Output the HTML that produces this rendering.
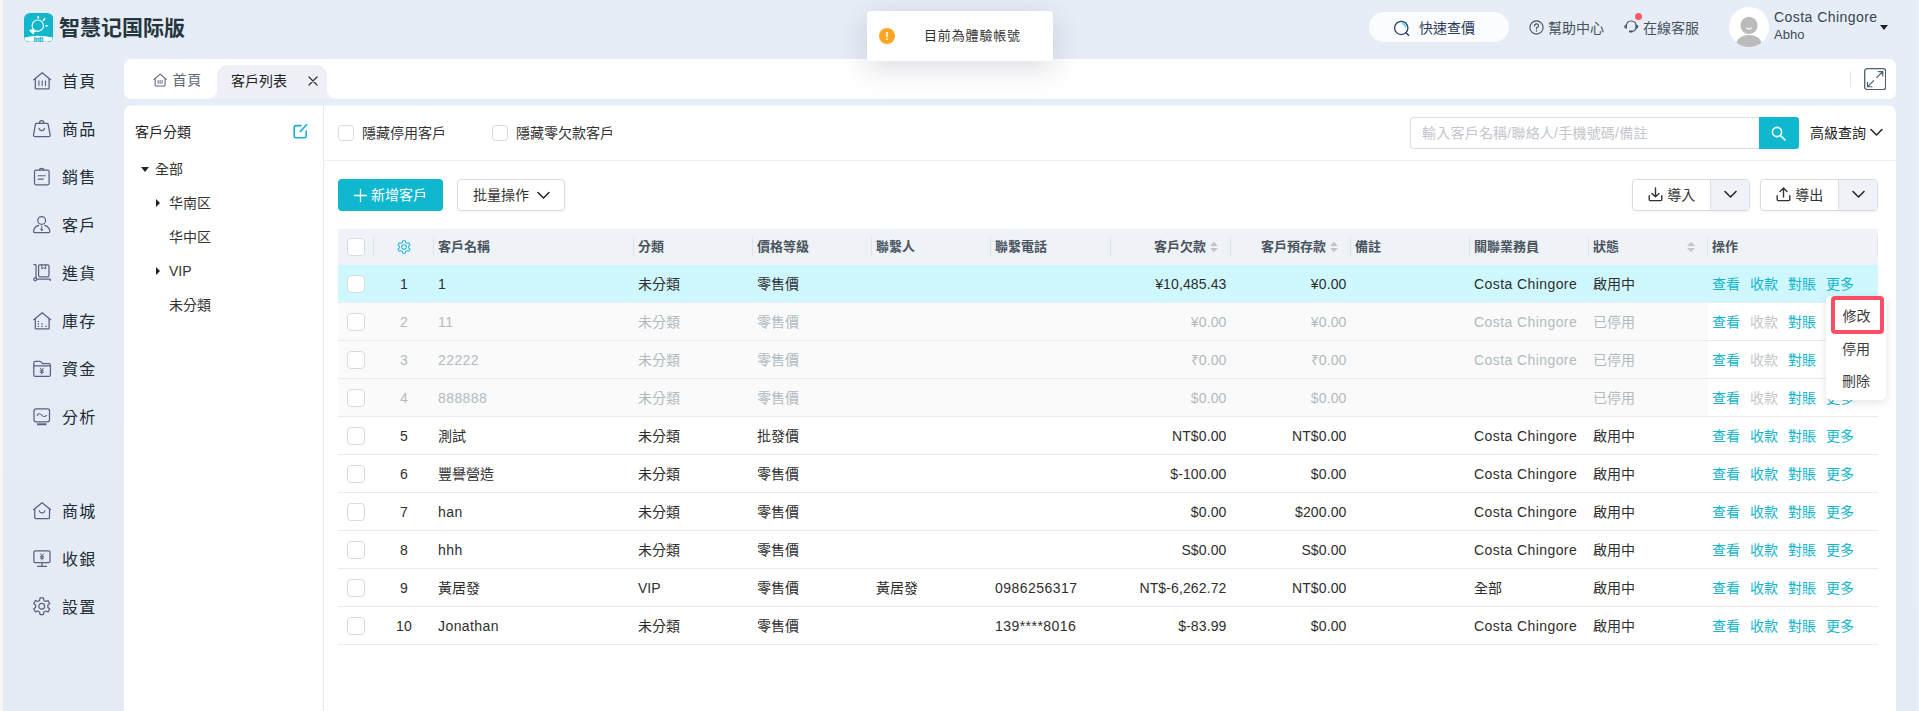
<!DOCTYPE html>
<html lang="zh-Hant">
<head>
<meta charset="utf-8">
<title>客戶列表</title>
<style>
*{box-sizing:border-box;margin:0;padding:0}
html,body{width:1919px;height:711px;overflow:hidden}
body{position:relative;font-family:"Liberation Sans","Noto Sans CJK TC","Noto Sans CJK SC",sans-serif;font-size:14px;color:#222;
 background:linear-gradient(180deg,#e6edf6 0%,#e4ebf4 100%)}
i{font-style:normal;display:inline-block}
svg{display:block}
.edge{position:absolute;left:0;top:0;width:4px;height:711px;background:linear-gradient(90deg,#f7f7f7 0,#f5f5f6 70%,#dde2ea 100%)}
.edge2{position:absolute;left:1915.5px;top:0;width:3.5px;height:711px;background:linear-gradient(90deg,#dde3ed 0,#ebf0f7 35%,#ecf1f8 100%)}
.logo{position:absolute;left:23.9px;top:12.8px;width:29.3px;height:29.3px}
.logo svg{width:29.3px;height:29.3px}
.brand{position:absolute;left:59px;top:12.6px;font-size:21px;line-height:30px;font-weight:700;color:#26363e;font-family:"Liberation Sans","Noto Sans CJK SC",sans-serif;letter-spacing:0}

.quick{position:absolute;left:1369px;top:12px;width:140px;height:30px;border-radius:15px;background:#fbfcfe;color:#2b3a5c}
.quick svg{position:absolute;left:25px;top:8px}
.quick span{position:absolute;left:50px;top:1px;line-height:30px;font-size:14px}
.help{position:absolute;left:1529px;top:12px;height:30px;color:#45535c}
.help svg{position:absolute;left:0;top:8px}
.help span{position:absolute;left:19px;top:.7px;line-height:30px;white-space:nowrap}
.svc{position:absolute;left:1623px;top:12px;height:30px;color:#45535c}
.svc svg{position:absolute;left:1px;top:7.3px;width:14.5px;height:14.5px}
.svc span{position:absolute;left:20px;top:.7px;line-height:30px;white-space:nowrap}
.svc .dot{position:absolute;left:12.4px;top:1.4px;width:7px;height:7px;border-radius:50%;background:#ff5a64}
.avatar{position:absolute;left:1729px;top:7px;width:40px;height:40px}
.uname{position:absolute;left:1774px;top:7px;line-height:20px;font-size:14px;color:#35454e;white-space:nowrap;letter-spacing:.45px}
.ucomp{position:absolute;left:1774px;top:25.5px;line-height:18px;font-size:13px;color:#3f4d56;white-space:nowrap}
.ucaret{position:absolute;left:1880px;top:25px;width:0;height:0;border:4.5px solid transparent;border-top:5px solid #222;border-bottom:0}

.side{position:absolute;left:0;top:0;width:124px;height:711px}
.sitem{position:absolute;left:33px;height:24px;width:90px}
.sic{position:absolute;left:0.3px;top:2.7px;width:18px;height:18px}
.sic svg{width:18px;height:18px;overflow:visible}
.stx{position:absolute;left:29px;top:1.4px;line-height:24px;font-size:16px;color:#212b36;white-space:nowrap;letter-spacing:1.3px}

.tabbar{position:absolute;left:124px;top:59px;width:1772px;height:40px;background:#fff;border-radius:7px}
.tab1{position:absolute;left:0;top:0;width:93px;height:40px;color:#5f6577}
.tab1 svg{position:absolute;left:29.3px;top:13.6px;width:14.2px;height:14.2px}
.tab1 span{position:absolute;left:48.6px;top:1px;line-height:41px;font-size:14px;white-space:nowrap;letter-spacing:.6px}
.tab2{position:absolute;left:93px;top:6px;width:110px;height:34px;background:#edf0f6;border-radius:10px 10px 0 0;color:#222}
.tab2 .t2t{position:absolute;left:14px;top:1.5px;line-height:29px;font-size:14px;white-space:nowrap}
.tab2 .tclose{position:absolute;left:91px;top:11px}
.tab2 .tl,.tab2 .trr{position:absolute;bottom:0;width:9px;height:9px;background:#edf0f6}
.tab2 .tl{left:-9px}
.tab2 .trr{right:-9px}
.tab2 .tl:after,.tab2 .trr:after{content:"";position:absolute;top:-9px;width:18px;height:18px;border-radius:50%;background:#fff}
.tab2 .tl:after{left:-9px}
.tab2 .trr:after{left:0}
.tabsep{position:absolute;left:1726px;top:12px;width:1px;height:16px;background:#e3e6ec}
.full{position:absolute;left:1740px;top:9px;width:22.3px;height:22.3px}
.full svg{width:22.3px;height:22.3px}

.main{position:absolute;left:124px;top:105px;width:1772px;height:620px;clip-path:inset(0.6px 0 0 0 round 7px 7px 0 0);background:#fff;border-radius:7px 7px 0 0;overflow:hidden}
.cat{position:absolute;left:0;top:0;width:199px;height:620px}
.cat-t{position:absolute;left:11px;top:16px;line-height:22px;font-size:14px;color:#222}
.cat-e{position:absolute;left:169px;top:19px}
.tn{position:absolute;height:22px;line-height:22px;white-space:nowrap;color:#333}
.tn i{position:absolute;left:0;top:8px;width:0;height:0}
.tn i.ad{border:4.2px solid transparent;border-top:5px solid #222;border-bottom:0;top:9.5px;left:-1.5px}
.tn i.ar{border:4px solid transparent;border-left:4.6px solid #222;border-right:0;left:0;top:7.5px}
.tn span{position:absolute;left:13px;top:1px}
.vline{position:absolute;left:199px;top:0;width:1px;height:620px;background:#e4e7ed}
.filter{position:absolute;left:200px;top:0;width:1572px;height:54px}
.cb{width:16px;height:16px;border:1px solid #d9dadf;border-radius:3.5px;background:#fff}
.filter .cb{position:absolute}
.ftx{position:absolute;top:0;line-height:56px;font-size:14px;color:#333;white-space:nowrap}
.sinput{position:absolute;left:1086px;top:12px;width:350px;height:32px;border:1px solid #dcdfe6;border-right:0;border-radius:4px 0 0 4px;background:#fff}
.sinput span{position:absolute;left:11px;top:0;line-height:31px;font-size:14px;color:#c3c6cc;white-space:nowrap;letter-spacing:0.22px}
.sbtn{position:absolute;left:1435px;top:12px;width:40px;height:32px;background:#0fb8ce;border-radius:0 3px 3px 0}
.sbtn svg{position:absolute;left:11px;top:8px}
.adv{position:absolute;left:1486px;top:0;height:56px}
.adv span{position:absolute;left:0;top:0;line-height:56px;font-size:14px;color:#222;white-space:nowrap}
.adv .chev{position:absolute;left:60px;top:23px}
.hline{position:absolute;left:200px;top:55px;width:1572px;height:1px;background:#ebeef3}

.btn-add{position:absolute;left:214px;top:74px;width:105px;height:32px;border-radius:4px;background:#0fb8ce;color:#fff;font-size:14px}
.btn-add .plus{position:absolute;left:16px;top:10px}
.btn-add span+span{position:absolute;left:33px;top:0;line-height:32px;white-space:nowrap}
.btn-batch{position:absolute;left:333px;top:74px;width:108px;height:32px;box-shadow:0 1px 2px rgba(0,0,0,.06);border:1px solid #d9dbe0;border-radius:4px;background:#fff;color:#333}
.btn-batch span{position:absolute;left:15px;top:0;line-height:30px;white-space:nowrap}
.btn-batch .chev{position:absolute;left:79px;top:11px}
.btn-imp,.btn-exp{position:absolute;top:74px;height:32px;box-shadow:0 1px 2px rgba(0,0,0,.06);border:1px solid #d9dbe0;border-radius:4px;background:#fff;color:#333;overflow:hidden}
.btn-imp{left:1508px;width:118px}
.btn-exp{left:1636px;width:118px}
.bl{position:absolute;left:0;top:0;width:78px;height:30px;border-right:1px solid #dcdfe6}
.bl svg{position:absolute;left:15px;top:7px}
.bl span{position:absolute;left:34.2px;top:0;line-height:30px;white-space:nowrap}
.br{position:absolute;left:78px;top:0;width:38px;height:30px;background:#eff2f7}
.br .chev{position:absolute;left:12.5px;top:10.4px}

.table{position:absolute;left:214px;top:124px;width:1540px}
.th-row{display:flex;height:36px;background:#eff2f7}
.th{position:relative;height:36px;line-height:36px;font-weight:700;color:#49545e;padding:0 5px;white-space:nowrap;font-size:13px}
.th:not(.c0):before{content:"";position:absolute;left:0;top:8px;width:1px;height:20px;background:#dfe3ea}
.th.c12:after{content:"";position:absolute;right:0;top:8px;width:1px;height:20px;background:#dfe3ea}
.tr{display:flex;height:38px;border-bottom:1px solid #ebebed;background:#fff}
.td{height:37px;line-height:38.6px;padding:0 5px;white-space:nowrap;color:#2e2e2e;overflow:hidden}
.c0{width:35px}.c1{width:60px;text-align:center}.c2{width:200px}
.c3,.c4,.c5,.c9,.c10,.c11{width:119px}
.c6,.c7,.c8{width:120px}
.td.c6{letter-spacing:.45px}
.c12{width:171px}
.r{text-align:right;padding-right:4px}
.td.c7,.td.c8{padding-right:3.5px}
.th.r{padding-right:12px}
.c1.td{padding-left:7px}
.la{letter-spacing:.42px}
.nu{letter-spacing:.12px}
.c0 .cb{position:relative;top:10px;left:4px;display:block;width:17.7px;height:18px;border-radius:4px}
.th.c0 .cb{top:9px}
.th.c1 svg{position:absolute;left:22.6px;top:9.6px}
.tr.sel{background:#cff8fe}
.tr.dis{background:#fafafa}
.tr.dis .td{color:#b1bac0}
.tr.dis .td.c12{background:#fff;box-shadow:inset 1px 0 0 #fafafa}
.lk{color:#13b5cb;margin-right:10px}
.lk.off{color:#c5c6c9}
.sort{position:relative;display:inline-block;width:8px;height:10px;margin-left:4px;vertical-align:-1px}
.sort:before,.sort:after{content:"";position:absolute;left:0;width:0;height:0;border:4px solid transparent}
.sort:before{top:-4px;border-bottom:4px solid #c2c3c6}
.sort:after{top:6px;border-top:4px solid #c2c3c6}

.menu{position:absolute;left:1826px;top:296px;width:60px;height:104px;background:#fff;border-radius:5px;box-shadow:0 2px 10px rgba(0,0,0,.12)}
.mi{position:absolute;left:0;width:60px;height:32px;line-height:32px;text-align:center;font-size:14px;color:#3c3c3c}
.mi:nth-child(1){top:4px}.mi:nth-child(2){top:36.7px}.mi:nth-child(3){top:68.7px}
.mi.hl{left:5.2px;top:-0.3px;width:52.8px;height:38px;line-height:31.4px;border:4px solid #fa4e66;border-radius:4px;text-indent:-2px;padding-top:1px}

.toast{position:absolute;left:867px;top:11px;width:186px;height:50px;background:#fff;border-radius:4px;box-shadow:0 7px 30px rgba(40,50,75,.17)}
.warn{position:absolute;left:12px;top:17px;width:16px;height:16px;border-radius:50%;background:#fba622;color:#fff;font-size:11px;font-weight:700;line-height:16px;text-align:center}
.ttx{position:absolute;left:57px;top:0;line-height:50px;font-size:13px;color:#333;white-space:nowrap;letter-spacing:0.85px}

</style>
</head>
<body>

<div class="edge"></div>
<div class="edge2"></div>
<div class="logo"><svg width="30" height="30" viewBox="0 0 30 30"><rect x="0" y="0" width="30" height="30" rx="6.2" fill="#12b7cd"/><path d="M0.6 25.2 Q15 21.6 29.4 25.2 Q29.2 29.4 24 29.4 H6 Q0.8 29.4 0.6 25.2 Z" fill="#fff"/><circle cx="14.1" cy="13" r="5.8" fill="none" stroke="#fff" stroke-width="1.15"/><path d="M9.4 16.6 L5.6 17.9 L9.6 21.8 L9.9 19.6 L12 18.9" fill="#fff" stroke="#fff" stroke-width="0.7" stroke-linejoin="round"/><path d="M14.6 3.6 V5.2 M21.2 6 L20 7.4 M24 13.1 H22.4" stroke="#fff" stroke-width="1.7" stroke-linecap="round"/><text x="14.8" y="29.3" font-family="Liberation Sans, sans-serif" font-weight="700" font-size="6.6" stroke="#12b7cd" stroke-width="0.3" text-anchor="middle" fill="#12b7cd">intl</text></svg></div>
<div class="brand">智慧记国际版</div>

<div class="quick"><svg width="16" height="16" viewBox="0 0 16 16" fill="none" stroke="#5b6080" stroke-width="1.25" stroke-linecap="round" stroke-linejoin="round" style="overflow:visible"><circle cx="7.25" cy="7.9" r="6.65" stroke="#2b3c62"/><path d="M8.5 3.5 A4.6 4.6 0 0 1 11.8 7" stroke="#2fd9ee" stroke-width="1.3"/><path d="M11.9 12.7 L14.6 15.3" stroke="#2b3c62" stroke-width="1.5"/></svg><span>快速查價</span></div>
<div class="help"><svg width="15" height="15" viewBox="0 0 15 15" fill="none" stroke="#45535c" stroke-width="1.1" stroke-linecap="round" stroke-linejoin="round" ><circle cx="7.5" cy="7.5" r="6.6"/><path d="M5.5 6 Q5.5 3.9 7.5 3.9 Q9.5 3.9 9.5 5.7 Q9.5 6.9 7.5 7.9 V9"/><path d="M7.5 11 v0.1" stroke-width="1.5"/></svg><span>幫助中心</span></div>
<div class="svc"><svg width="16" height="16" viewBox="0 0 16 16" fill="none" stroke="#45535c" stroke-width="1.2" stroke-linecap="round" stroke-linejoin="round" ><path d="M2.6 8.4 Q2.6 2.2 8 2.2 Q13.4 2.2 13.4 8.4 Q13.4 13.6 8.6 13.8"/><path d="M2.6 6.6 Q0.8 6.8 0.8 8.4 Q0.8 10 2.6 10.2 Z M13.4 6.6 Q15.2 6.8 15.2 8.4 Q15.2 10 13.4 10.2 Z"/><path d="M6.4 13.8 H8.8" stroke-width="2"/></svg><span>在線客服</span><i class="dot"></i></div>
<div class="avatar"><svg width="40" height="40" viewBox="0 0 40 40"><defs><clipPath id="avc"><circle cx="20" cy="20" r="20"/></clipPath></defs><circle cx="20" cy="20" r="20" fill="#fff"/><g clip-path="url(#avc)"><circle cx="20" cy="18.4" r="8.6" fill="#bcbcbc"/><path d="M6.5 42 Q6.5 28 20 28 Q33.5 28 33.5 42 Z" fill="#bcbcbc"/><path d="M17.6 21 Q20 23 22.4 21" stroke="#f3f3f3" stroke-width="1.3" fill="none" stroke-linecap="round"/></g></svg></div>
<div class="uname">Costa Chingore</div>
<div class="ucomp">Abho</div>
<div class="ucaret"></div>

<div class="side"><div class="sitem" style="top:69px"><span class="sic"><svg width="18" height="18" viewBox="0 0 18 18" fill="none" stroke="#5b6080" stroke-width="1.25" stroke-linecap="round" stroke-linejoin="round" ><path d="M0.8 7.7 L9.2 0.7 L17.6 7.7"/><path d="M2.3 6.6 V16.2 Q2.3 16.9 3 16.9 H15.4 Q16.1 16.9 16.1 16.2 V6.6"/><path d="M5.9 8.8 V13.6 M9.2 8.8 V13.6 M12.5 8.8 V13.6" stroke-width="1.1"/></svg></span><span class="stx">首頁</span></div><div class="sitem" style="top:117px"><span class="sic"><svg width="18" height="18" viewBox="0 0 18 18" fill="none" stroke="#5b6080" stroke-width="1.25" stroke-linecap="round" stroke-linejoin="round" ><path d="M3.4 3.3 H14 Q14.9 3.3 15.1 4.2 L17.1 14.6 Q17.5 16.6 15.5 16.6 H2.2 Q0.2 16.6 0.6 14.6 L2.4 4.2 Q2.6 3.3 3.4 3.3 Z"/><path d="M6.5 3.2 Q6.5 0.7 8.7 0.7 Q10.9 0.7 10.9 3.2"/><path d="M6 8.2 C6.5 11.4 11.1 11.4 11.6 8.2" stroke-width="1.1"/></svg></span><span class="stx">商品</span></div><div class="sitem" style="top:165px"><span class="sic"><svg width="18" height="18" viewBox="0 0 18 18" fill="none" stroke="#5b6080" stroke-width="1.25" stroke-linecap="round" stroke-linejoin="round" ><rect x="1.5" y="2.2" width="14.6" height="14.6" rx="1.5"/><path d="M6.6 2.1 Q6.6 0.4 8.7 0.4 Q10.8 0.4 10.8 2.1"/><path d="M5.1 7.8 H12.3 M5.1 11.1 H10.3" stroke-width="1.1"/></svg></span><span class="stx">銷售</span></div><div class="sitem" style="top:213px"><span class="sic"><svg width="18" height="18" viewBox="0 0 18 18" fill="none" stroke="#5b6080" stroke-width="1.25" stroke-linecap="round" stroke-linejoin="round" ><circle cx="8.7" cy="4.4" r="3.9"/><path d="M5.6 9.3 Q0.6 11 0.6 15.6 Q0.6 16.5 1.5 16.5 H15.9 Q16.8 16.5 16.8 15.6 Q16.8 11 11.8 9.3"/><path d="M8.7 10 V14.6 M7.8 13.2 L8.7 14.9 L9.6 13.2" stroke-width="1"/></svg></span><span class="stx">客戶</span></div><div class="sitem" style="top:261px"><span class="sic"><svg width="18" height="18" viewBox="0 0 18 18" fill="none" stroke="#5b6080" stroke-width="1.25" stroke-linecap="round" stroke-linejoin="round" ><path d="M0.9 0.5 H2.2 Q3 0.5 3 1.3 V14.3 M3.9 15.1 H17.3 V16.4"/><circle cx="2.2" cy="15.3" r="1.5"/><rect x="5.6" y="0.8" width="10.4" height="12" rx="1.3"/><path d="M8.8 0.9 V4.9 L10.7 3.8 L12.6 4.9 V0.9" stroke-width="1"/></svg></span><span class="stx">進貨</span></div><div class="sitem" style="top:309px"><span class="sic"><svg width="18" height="18" viewBox="0 0 18 18" fill="none" stroke="#5b6080" stroke-width="1.25" stroke-linecap="round" stroke-linejoin="round" ><path d="M0.8 7.7 L9.2 0.7 L17.6 7.7"/><path d="M2.3 6.6 V16.2 Q2.3 16.9 3 16.9 H15.4 Q16.1 16.9 16.1 16.2 V6.6"/><path d="M5.3 9.4 h0.1 M5.3 11.8 h0.1 M5.3 14.2 h0.1 M8.9 11.8 h0.1 M8.9 14.2 h0.1 M12.9 14.2 h0.1" stroke-width="1.5"/></svg></span><span class="stx">庫存</span></div><div class="sitem" style="top:357px"><span class="sic"><svg width="18" height="18" viewBox="0 0 18 18" fill="none" stroke="#5b6080" stroke-width="1.25" stroke-linecap="round" stroke-linejoin="round" ><path d="M0.8 14.9 V2.9 Q0.8 1.4 2.3 1.4 H6.8 Q7.5 1.4 8 1.9 L9.3 3.2 Q9.8 3.7 10.5 3.7 H15.9 Q17.4 3.7 17.4 5.2 V14.9 Q17.4 16.4 15.9 16.4 H2.3 Q0.8 16.4 0.8 14.9 Z"/><path d="M0.8 5.9 H17.4" stroke-width="1.1"/><path d="M7.3 8.2 L8.8 10.2 L10.3 8.2 M8.8 10.2 V14 M7.2 10.8 H10.4 M7.2 12.4 H10.4" stroke-width="1"/></svg></span><span class="stx">資金</span></div><div class="sitem" style="top:405px"><span class="sic"><svg width="18" height="18" viewBox="0 0 18 18" fill="none" stroke="#5b6080" stroke-width="1.25" stroke-linecap="round" stroke-linejoin="round" ><rect x="1" y="0.9" width="15.5" height="12.9" rx="2"/><path d="M4 16.3 H13.4" stroke-width="1.9" stroke-linecap="butt"/><path d="M4.2 7.4 Q6.2 4.2 8.6 7 Q11 9.8 13.4 7.4" stroke-width="1.1"/></svg></span><span class="stx">分析</span></div><div class="sitem" style="top:499px"><span class="sic"><svg width="18" height="18" viewBox="0 0 18 18" fill="none" stroke="#5b6080" stroke-width="1.25" stroke-linecap="round" stroke-linejoin="round" ><path d="M0.7 7.6 L9.1 0.7 L17.5 7.6"/><path d="M1.7 6.9 V15.6 Q1.7 16.5 2.6 16.5 H15.6 Q16.5 16.5 16.5 15.6 V6.9"/><path d="M6.3 8.5 C6.8 11.7 11.4 11.7 11.9 8.5" stroke-width="1.1"/></svg></span><span class="stx">商城</span></div><div class="sitem" style="top:547px"><span class="sic"><svg width="18" height="18" viewBox="0 0 18 18" fill="none" stroke="#5b6080" stroke-width="1.25" stroke-linecap="round" stroke-linejoin="round" ><rect x="0.9" y="0.9" width="16.1" height="11.7" rx="1.4"/><path d="M9 12.6 V16.3 M4.6 16.4 H13.4"/><path d="M7.5 3.8 L9 5.8 L10.5 3.8 M9 5.8 V10 M7.4 6.6 H10.6 M7.4 8.2 H10.6" stroke-width="1"/></svg></span><span class="stx">收銀</span></div><div class="sitem" style="top:595px"><span class="sic"><svg width="18" height="18" viewBox="0 0 18 18" fill="none" stroke="#5b6080" stroke-width="1.05" stroke-linecap="round" stroke-linejoin="round" ><g transform="translate(-1.8 -1.7) scale(1.17)"><path d="M7.6 1.4 H10.4 L10.9 3.6 L12.3 4.4 L14.4 3.7 L15.8 6.1 L14.2 7.6 V9.4 L15.8 10.9 L14.4 13.3 L12.3 12.6 L10.9 13.4 L10.4 15.6 H7.6 L7.1 13.4 L5.7 12.6 L3.6 13.3 L2.2 10.9 L3.8 9.4 V7.6 L2.2 6.1 L3.6 3.7 L5.7 4.4 L7.1 3.6 Z"/><circle cx="9" cy="8.5" r="2.5"/></g></svg></span><span class="stx">設置</span></div></div>

<div class="tabbar">
  <div class="tab1"><svg width="15" height="15" viewBox="0 0 18 18" fill="none" stroke="#5b6080" stroke-width="1.35" stroke-linecap="round" stroke-linejoin="round" ><path d="M1.2 8.2 L9 1.3 L16.8 8.2"/><path d="M2.7 7 V15.2 Q2.7 16.6 4.1 16.6 H13.9 Q15.3 16.6 15.3 15.2 V7"/><path d="M6.5 9.5 V13.2 M9 9.5 V13.2 M11.5 9.5 V13.2" stroke-width="1.2"/></svg><span>首頁</span></div>
  <div class="tab2"><span class="tl"></span><span class="trr"></span><span class="t2t">客戶列表</span><svg width="10" height="10" viewBox="0 0 10 10" fill="none" stroke="#333" stroke-width="1.2" stroke-linecap="round" stroke-linejoin="round" class="tclose"><path d="M1 1 L9 9 M9 1 L1 9"/></svg></div>
  <div class="tabsep"></div>
  <div class="full"><svg width="24" height="24" viewBox="0 0 24 24" fill="none" stroke="#4b6071" stroke-width="1.4" stroke-linecap="round" stroke-linejoin="round" ><rect x="0.75" y="0.75" width="22.5" height="22.5" rx="2.6" stroke-width="1.4"/><path d="M13.6 10.4 L20 4 M15.4 3.8 H20.2 V8.6 M10.4 13.6 L4 20 M3.8 15.4 V20.2 H8.6" stroke-width="1.3"/></svg></div>
</div>

<div class="main">
  <div class="cat">
    <div class="cat-t">客戶分類</div>
    <div class="cat-e"><svg width="15" height="15" viewBox="0 0 15 15" fill="none" stroke="#13b5cb" stroke-width="1.6" stroke-linecap="round" stroke-linejoin="round" ><path d="M8 1.6 H2.8 Q1.2 1.6 1.2 3.2 V12.2 Q1.2 13.8 2.8 13.8 H11.6 Q13.2 13.8 13.2 12.2 V7"/><path d="M13.6 0.8 L7.4 7.4"/></svg></div>
    <div class="tn" style="top:52px;left:18px"><i class="ad"></i><span>全部</span></div>
    <div class="tn" style="top:86px;left:32px"><i class="ar"></i><span>华南区</span></div>
    <div class="tn" style="top:120px;left:32px"><i class="an"></i><span>华中区</span></div>
    <div class="tn" style="top:154px;left:32px"><i class="ar"></i><span>VIP</span></div>
    <div class="tn" style="top:188px;left:32px"><i class="an"></i><span>未分類</span></div>
  </div>
  <div class="vline"></div>
  <div class="filter">
    <i class="cb" style="left:14px;top:20px"></i><span class="ftx" style="left:38px">隱藏停用客戶</span>
    <i class="cb" style="left:168px;top:20px"></i><span class="ftx" style="left:192px">隱藏零欠款客戶</span>
    <div class="sinput"><span>輸入客戶名稱/聯絡人/手機號碼/備註</span></div>
    <div class="sbtn"><svg width="17" height="17" viewBox="0 0 17 17" fill="none" stroke="#fff" stroke-width="1.6" stroke-linecap="round" stroke-linejoin="round" ><circle cx="7" cy="7" r="4.6"/><path d="M10.6 10.6 L15 15"/></svg></div>
    <div class="adv"><span>高級查詢</span><svg width="13" height="9" viewBox="0 0 13 9" fill="none" stroke="#222" stroke-width="1.5" stroke-linecap="round" stroke-linejoin="round" class="chev"><path d="M1 1.5 L6.5 7 L12 1.5"/></svg></div>
  </div>
  <div class="hline"></div>
  <div class="btn-add"><span class="plus"><svg width="13" height="13" viewBox="0 0 13 13" fill="none" stroke="#fff" stroke-width="1.3" stroke-linecap="round" stroke-linejoin="round" ><path d="M6.5 0.5 V12.5 M0.5 6.5 H12.5"/></svg></span><span>新增客戶</span></div>
  <div class="btn-batch"><span>批量操作</span><svg width="13" height="9" viewBox="0 0 13 9" fill="none" stroke="#222" stroke-width="1.5" stroke-linecap="round" stroke-linejoin="round" class="chev"><path d="M1 1.5 L6.5 7 L12 1.5"/></svg></div>
  <div class="btn-imp"><div class="bl"><svg width="15" height="15" viewBox="0 0 15 15" fill="none" stroke="#333" stroke-width="1.4" stroke-linecap="round" stroke-linejoin="round" ><path d="M7.5 1 V9.6 M4 6.4 L7.5 9.8 L11 6.4"/><path d="M1.2 8.6 V12.6 Q1.2 13.6 2.2 13.6 H12.8 Q13.8 13.6 13.8 12.6 V8.6"/></svg><span>導入</span></div><div class="br"><svg width="13" height="9" viewBox="0 0 13 9" fill="none" stroke="#222" stroke-width="1.5" stroke-linecap="round" stroke-linejoin="round" class="chev"><path d="M1 1.5 L6.5 7 L12 1.5"/></svg></div></div>
  <div class="btn-exp"><div class="bl"><svg width="15" height="15" viewBox="0 0 15 15" fill="none" stroke="#333" stroke-width="1.4" stroke-linecap="round" stroke-linejoin="round" ><path d="M7.5 10 V1.2 M4 4.6 L7.5 1.1 L11 4.6"/><path d="M1.2 8.6 V12.6 Q1.2 13.6 2.2 13.6 H12.8 Q13.8 13.6 13.8 12.6 V8.6"/></svg><span>導出</span></div><div class="br"><svg width="13" height="9" viewBox="0 0 13 9" fill="none" stroke="#222" stroke-width="1.5" stroke-linecap="round" stroke-linejoin="round" class="chev"><path d="M1 1.5 L6.5 7 L12 1.5"/></svg></div></div>

  <div class="table">
    <div class="th-row">
      <div class="th c0"><i class="cb"></i></div>
      <div class="th c1"><svg width="16" height="16" viewBox="0 0 18 18" fill="none" stroke="#25b7d3" stroke-width="1.15" stroke-linecap="round" stroke-linejoin="round" ><g transform="translate(0 0.5)"><path d="M7.6 1.4 H10.4 L10.9 3.6 L12.3 4.4 L14.4 3.7 L15.8 6.1 L14.2 7.6 V9.4 L15.8 10.9 L14.4 13.3 L12.3 12.6 L10.9 13.4 L10.4 15.6 H7.6 L7.1 13.4 L5.7 12.6 L3.6 13.3 L2.2 10.9 L3.8 9.4 V7.6 L2.2 6.1 L3.6 3.7 L5.7 4.4 L7.1 3.6 Z"/><circle cx="9" cy="8.5" r="2.6"/></g></svg></div>
      <div class="th c2">客戶名稱</div>
      <div class="th c3">分類</div>
      <div class="th c4">價格等級</div>
      <div class="th c5">聯繫人</div>
      <div class="th c6">聯繫電話</div>
      <div class="th c7 r">客戶欠款<i class="sort"></i></div>
      <div class="th c8 r">客戶預存款<i class="sort"></i></div>
      <div class="th c9">備註</div>
      <div class="th c10">關聯業務員</div>
      <div class="th c11">狀態<i class="sort" style="position:absolute;right:12px;top:13px"></i></div>
      <div class="th c12">操作</div>
    </div>
    <div class="tr sel"><div class="td c0"><i class="cb"></i></div><div class="td c1 nu">1</div><div class="td c2 la">1</div><div class="td c3">未分類</div><div class="td c4">零售價</div><div class="td c5"></div><div class="td c6 nu"></div><div class="td c7 r nu">¥10,485.43</div><div class="td c8 r nu">¥0.00</div><div class="td c9"></div><div class="td c10 la">Costa Chingore</div><div class="td c11">啟用中</div><div class="td c12"><span class="lk">查看</span><span class="lk">收款</span><span class="lk">對賬</span><span class="lk">更多</span></div></div><div class="tr dis"><div class="td c0"><i class="cb"></i></div><div class="td c1 nu">2</div><div class="td c2 la">11</div><div class="td c3">未分類</div><div class="td c4">零售價</div><div class="td c5"></div><div class="td c6 nu"></div><div class="td c7 r nu">¥0.00</div><div class="td c8 r nu">¥0.00</div><div class="td c9"></div><div class="td c10 la">Costa Chingore</div><div class="td c11">已停用</div><div class="td c12"><span class="lk">查看</span><span class="lk off">收款</span><span class="lk">對賬</span><span class="lk">更多</span></div></div><div class="tr dis"><div class="td c0"><i class="cb"></i></div><div class="td c1 nu">3</div><div class="td c2 la">22222</div><div class="td c3">未分類</div><div class="td c4">零售價</div><div class="td c5"></div><div class="td c6 nu"></div><div class="td c7 r nu">₹0.00</div><div class="td c8 r nu">₹0.00</div><div class="td c9"></div><div class="td c10 la">Costa Chingore</div><div class="td c11">已停用</div><div class="td c12"><span class="lk">查看</span><span class="lk off">收款</span><span class="lk">對賬</span><span class="lk">更多</span></div></div><div class="tr dis"><div class="td c0"><i class="cb"></i></div><div class="td c1 nu">4</div><div class="td c2 la">888888</div><div class="td c3">未分類</div><div class="td c4">零售價</div><div class="td c5"></div><div class="td c6 nu"></div><div class="td c7 r nu">$0.00</div><div class="td c8 r nu">$0.00</div><div class="td c9"></div><div class="td c10"></div><div class="td c11">已停用</div><div class="td c12"><span class="lk">查看</span><span class="lk off">收款</span><span class="lk">對賬</span><span class="lk">更多</span></div></div><div class="tr"><div class="td c0"><i class="cb"></i></div><div class="td c1 nu">5</div><div class="td c2">測試</div><div class="td c3">未分類</div><div class="td c4">批發價</div><div class="td c5"></div><div class="td c6 nu"></div><div class="td c7 r nu">NT$0.00</div><div class="td c8 r nu">NT$0.00</div><div class="td c9"></div><div class="td c10 la">Costa Chingore</div><div class="td c11">啟用中</div><div class="td c12"><span class="lk">查看</span><span class="lk">收款</span><span class="lk">對賬</span><span class="lk">更多</span></div></div><div class="tr"><div class="td c0"><i class="cb"></i></div><div class="td c1 nu">6</div><div class="td c2">豐譽營造</div><div class="td c3">未分類</div><div class="td c4">零售價</div><div class="td c5"></div><div class="td c6 nu"></div><div class="td c7 r nu">$-100.00</div><div class="td c8 r nu">$0.00</div><div class="td c9"></div><div class="td c10 la">Costa Chingore</div><div class="td c11">啟用中</div><div class="td c12"><span class="lk">查看</span><span class="lk">收款</span><span class="lk">對賬</span><span class="lk">更多</span></div></div><div class="tr"><div class="td c0"><i class="cb"></i></div><div class="td c1 nu">7</div><div class="td c2 la">han</div><div class="td c3">未分類</div><div class="td c4">零售價</div><div class="td c5"></div><div class="td c6 nu"></div><div class="td c7 r nu">$0.00</div><div class="td c8 r nu">$200.00</div><div class="td c9"></div><div class="td c10 la">Costa Chingore</div><div class="td c11">啟用中</div><div class="td c12"><span class="lk">查看</span><span class="lk">收款</span><span class="lk">對賬</span><span class="lk">更多</span></div></div><div class="tr"><div class="td c0"><i class="cb"></i></div><div class="td c1 nu">8</div><div class="td c2 la">hhh</div><div class="td c3">未分類</div><div class="td c4">零售價</div><div class="td c5"></div><div class="td c6 nu"></div><div class="td c7 r nu">S$0.00</div><div class="td c8 r nu">S$0.00</div><div class="td c9"></div><div class="td c10 la">Costa Chingore</div><div class="td c11">啟用中</div><div class="td c12"><span class="lk">查看</span><span class="lk">收款</span><span class="lk">對賬</span><span class="lk">更多</span></div></div><div class="tr"><div class="td c0"><i class="cb"></i></div><div class="td c1 nu">9</div><div class="td c2">黃居發</div><div class="td c3">VIP</div><div class="td c4">零售價</div><div class="td c5">黃居發</div><div class="td c6 nu">0986256317</div><div class="td c7 r nu">NT$-6,262.72</div><div class="td c8 r nu">NT$0.00</div><div class="td c9"></div><div class="td c10">全部</div><div class="td c11">啟用中</div><div class="td c12"><span class="lk">查看</span><span class="lk">收款</span><span class="lk">對賬</span><span class="lk">更多</span></div></div><div class="tr"><div class="td c0"><i class="cb"></i></div><div class="td c1 nu">10</div><div class="td c2 la">Jonathan</div><div class="td c3">未分類</div><div class="td c4">零售價</div><div class="td c5"></div><div class="td c6 nu">139****8016</div><div class="td c7 r nu">$-83.99</div><div class="td c8 r nu">$0.00</div><div class="td c9"></div><div class="td c10 la">Costa Chingore</div><div class="td c11">啟用中</div><div class="td c12"><span class="lk">查看</span><span class="lk">收款</span><span class="lk">對賬</span><span class="lk">更多</span></div></div>
  </div>
</div>

<div class="menu">
  <div class="mi hl">修改</div>
  <div class="mi">停用</div>
  <div class="mi">刪除</div>
</div>

<div class="toast"><span class="warn">!</span><span class="ttx">目前為體驗帳號</span></div>

</body>
</html>
